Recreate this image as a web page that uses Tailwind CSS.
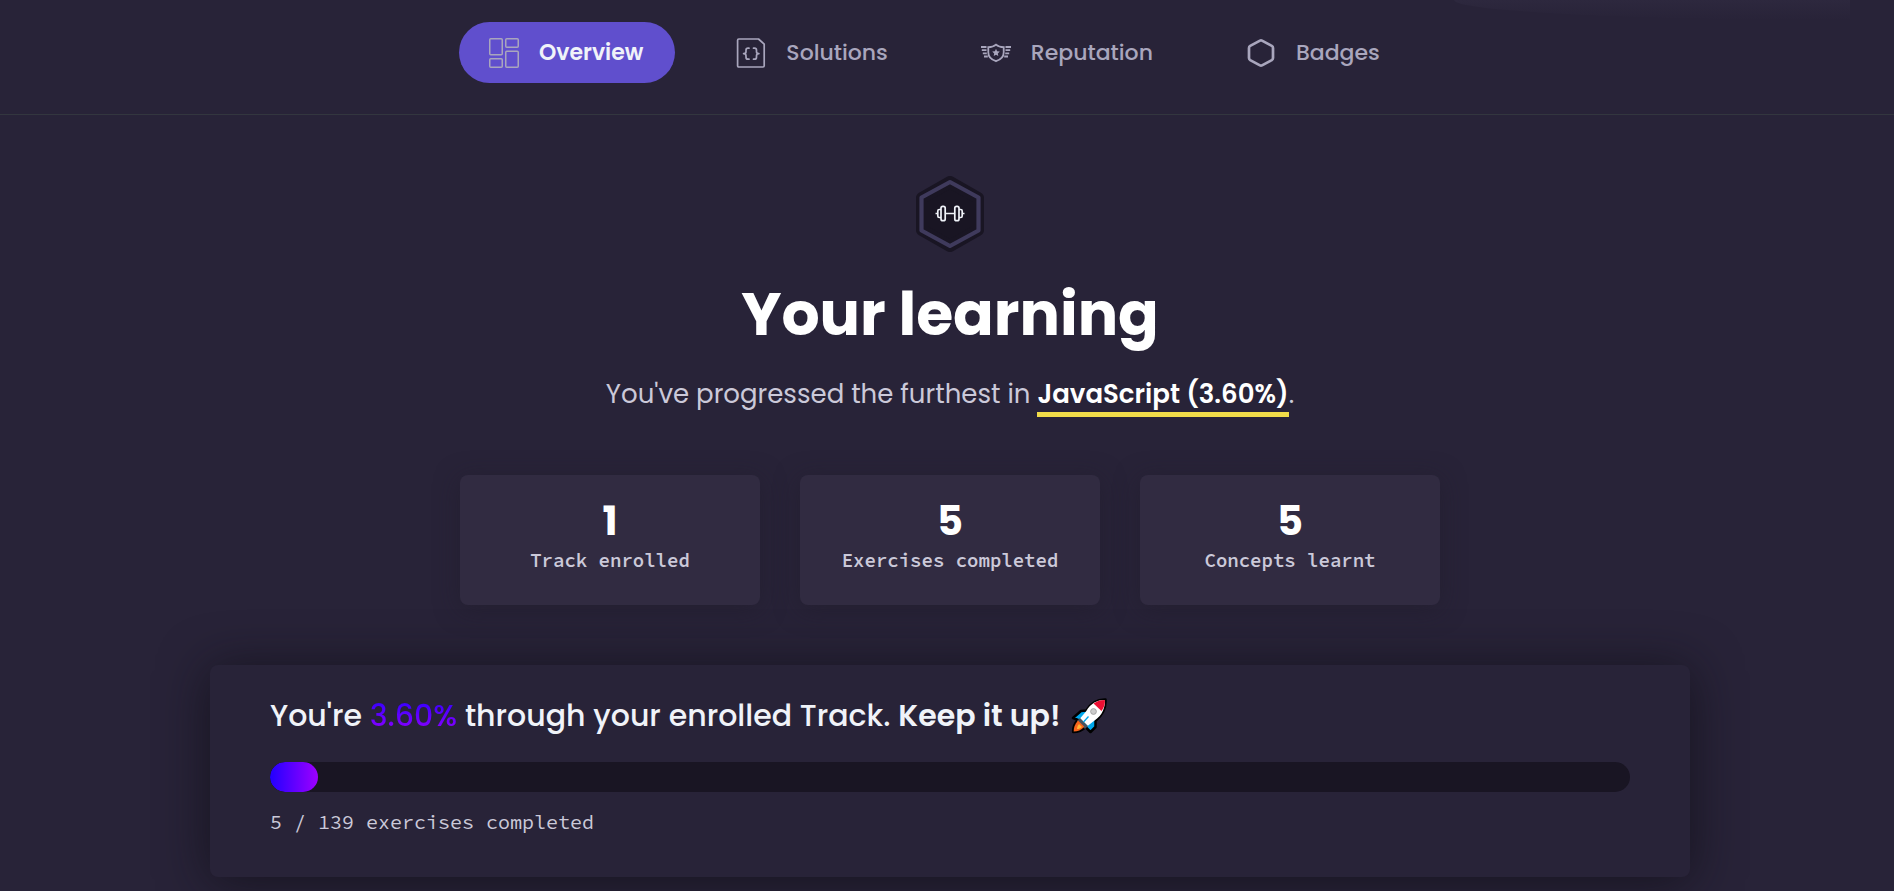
<!DOCTYPE html>
<html lang="en">
<head>
<meta charset="utf-8">
<meta name="viewport" content="width=device-width, initial-scale=1">
<title>Your learning</title>
<script src="https://cdn.jsdelivr.net/npm/@tailwindcss/browser@4"></script>
</head>
<body class="min-h-screen overflow-x-hidden bg-[#282338] font-['Poppins','Inter',sans-serif] text-[#f0f3f9]">
<header class="relative border-b border-[#33363f] pl-[6px]">
  <div class="pointer-events-none absolute top-0 right-[44px] h-[20px] w-[396px] rounded-bl-[100%] bg-linear-to-b from-[#2d283e] to-[#282338]"></div>
  <nav class="relative mx-auto flex max-w-[982px] gap-[31px] pt-[22px] pb-[31px] text-[22px] leading-[33px] font-medium text-[#a9a6bd]" aria-label="Dashboard">
    <a href="#" aria-current="page" class="flex items-center gap-5 rounded-full bg-[#604fcd] py-[14px] pr-8 pl-[30px] font-semibold text-[#f0f3f9]">
      <svg class="size-[30px]" viewBox="0 0 30 30" fill="none" stroke="#a9a6bd" stroke-width="1.5" aria-hidden="true"><rect x=".75" y=".75" width="12.5" height="16" rx="1"/><rect x="16.75" y=".75" width="12.5" height="8.5" rx="1"/><rect x=".75" y="20.75" width="12.5" height="8.5" rx="1"/><rect x="16.75" y="13.25" width="12.5" height="16" rx="1"/></svg>
      Overview
    </a>
    <a href="#" class="flex items-center gap-5 py-[14px] pr-8 pl-[30px]">
      <svg class="size-[30px]" viewBox="0 0 30 30" fill="none" stroke="currentColor" stroke-width="1.7" stroke-linecap="round" stroke-linejoin="round" aria-hidden="true"><path d="M2.8 1h19.7l5.7 5.2v21.6q0 1.2-1.2 1.2H2.8q-1.2 0-1.2-1.2V2.2Q1.600 1 2.800 1z"/><path d="M13 10.200h-1q-2 0-2 2v1.500q0 1.800-2.400 2 2.400.2 2.400 2v1.500q0 2 2 2h1M17.500 10.200h1q2 0 2 2v1.500q0 1.800 2.400 2-2.400.2-2.400 2v1.500q0 2-2 2h-1"/></svg>
      Solutions
    </a>
    <a href="#" class="flex items-center gap-5 py-[14px] pr-8 pl-[30px]">
      <svg class="size-[30px]" viewBox="0 0 30 30" fill="none" stroke="currentColor" stroke-width="1.8" aria-hidden="true"><path d="M15 6.600c2 1.800 4.500 2.600 7.700 2.600v5.300c0 4.600-3 7.200-7.700 8.700-4.700-1.500-7.700-4.100-7.700-8.700V9.200c3.200 0 5.700-.8 7.700-2.600z"/><path d="M0 9h5.500M.8 12.200h4.700M1.800 15.400h4M3 18.500h3.800M30 9h-5.500M29.200 12.200h-4.700M28.200 15.400h-4M27 18.500h-3.800"/><path d="M15 10.800l1.100 2.500 2.700.3-2 1.800.5 2.700-2.300-1.400-2.300 1.400.5-2.700-2-1.800 2.700-.3z" fill="currentColor" stroke="none"/></svg>
      Reputation
    </a>
    <a href="#" class="flex items-center gap-5 py-[14px] pr-8 pl-[30px]">
      <svg class="size-[30px]" viewBox="0 0 30 30" fill="none" stroke="currentColor" stroke-width="2.700" stroke-linejoin="round" aria-hidden="true"><path d="M14 2.600q1-.5 2 0l9.800 5.300q1.200.7 1.200 2v10.200q0 1.300-1.200 2L16 27.400q-1 .5-2 0l-9.800-5.300q-1.200-.7-1.200-2V9.900q0-1.300 1.200-2z"/></svg>
      Badges
    </a>
  </nav>
</header>
<main class="flex flex-col items-center pt-[61px] pb-[14px] pl-[6px]">
  <svg class="h-[76px] w-[68px]" viewBox="0 0 68 76" fill="none" aria-hidden="true"><path d="M34 6L62 22V54L34 70L6 54V22z" fill="#191523" stroke="#191523" stroke-width="12" stroke-linejoin="round"/><path d="M34 6L62.500 21.500V54.500L34 70L5.500 54.500V21.500z" stroke="#3f3a5c" stroke-width="4.200" stroke-linejoin="round"/><g stroke="#f0f3f9" stroke-width="1.700"><path d="M29.500 37.500h9M19.500 37.500h2M46.500 37.500h2"/><rect x="25" y="30.300" width="4.200" height="14.400" rx="1.800"/><rect x="38.800" y="30.300" width="4.200" height="14.400" rx="1.800"/><path d="M25 33.500h-1.700q-1.500 0-1.500 1.500v5q0 1.500 1.500 1.500H25M43 33.500h1.700q1.500 0 1.500 1.500v5q0 1.500-1.500 1.500H43"/></g></svg>
  <h1 class="mt-[25px] text-[60px] leading-[74px] font-bold text-white">Your learning</h1>
  <p class="mt-[22px] text-[26px] leading-[42px] text-[#cbc9d9]">You've progressed the furthest in <a href="#" class="inline-block border-b-[5px] border-[#f1dc49] leading-[36px] font-semibold text-white">JavaScript (3.60%)</a>.</p>
  <ul class="mt-[58px] grid w-full max-w-[980px] grid-cols-3 gap-10 text-center">
    <li class="rounded-lg bg-[#312b41] px-5 pt-[22px] pb-[30px] shadow-[0_4px_24px_#1f1b2a80]"><strong class="block text-[40px] leading-[48px] font-bold text-white">1</strong><span class="mt-px block font-['Source_Code_Pro','Liberation_Mono',monospace] text-[19px] leading-[29px] font-semibold text-[#cbc9d9]">Track enrolled</span></li>
    <li class="rounded-lg bg-[#312b41] px-5 pt-[22px] pb-[30px] shadow-[0_4px_24px_#1f1b2a80]"><strong class="block text-[40px] leading-[48px] font-bold text-white">5</strong><span class="mt-px block font-['Source_Code_Pro','Liberation_Mono',monospace] text-[19px] leading-[29px] font-semibold text-[#cbc9d9]">Exercises completed</span></li>
    <li class="rounded-lg bg-[#312b41] px-5 pt-[22px] pb-[30px] shadow-[0_4px_24px_#1f1b2a80]"><strong class="block text-[40px] leading-[48px] font-bold text-white">5</strong><span class="mt-px block font-['Source_Code_Pro','Liberation_Mono',monospace] text-[19px] leading-[29px] font-semibold text-[#cbc9d9]">Concepts learnt</span></li>
  </ul>
  <section class="mt-[60px] w-full max-w-[1480px] rounded-lg bg-[#282338] px-[60px] pt-[27px] pb-[39px] shadow-[0_4px_50px_#0f0d14b0]">
    <h2 class="flex items-center gap-[10px] text-[30px] leading-[48px] font-medium"><span>You're <span class="bg-linear-to-b/srgb from-[#2200ff] to-[#9e00ff] bg-clip-text text-transparent">3.60%</span> through your enrolled Track. <strong class="font-semibold">Keep it up!</strong></span>
      <svg class="size-9" viewBox="0 0 36 36" role="img" aria-label="Rocket"><path d="M34.500 1.500C27 1.300 20.500 4 15.500 12.500L10 13 2 20l5 2c-4 4-5 7.500-4.800 12C7 34 11 32.500 14.500 29l5 5 5-5v-6C32 17 35 9 34.500 1.500z" fill="#00a8ec" stroke="#000" stroke-width="2.500" stroke-linejoin="round"/><path d="M34 2c-8 0-14 3-19 11.500L9 20.500l7.500 7.500 7-5.500C32 17 34 9 34 2z" fill="#fff"/><path d="M34 2c-4.500 0-8 1-11.500 3.500l8 7.500C33 10 34 6 34 2z" fill="#ed1033"/><path d="M9 20l8 8-3 3-8-8z" fill="#46545e"/><path d="M7 22.500C3.500 26.500 2.700 30 2.700 33.500c4 0 7.300-1.300 10.600-4.700z" fill="#f7631b"/><path d="M8 26l3 3c-1.500 1.500-3 2-5 2 .2-2 .7-3.500 2-5z" fill="#ffb636"/><circle cx="22.500" cy="13.500" r="2.900" fill="#ccc" stroke="#999" stroke-width=".8"/><path d="M17.500 18.500L12.500 24" stroke="#00a8ec" stroke-width="1.300"/></svg>
    </h2>
    <div class="mt-[22px] h-[30px] overflow-hidden rounded-full bg-[#191523]" role="progressbar" aria-label="Exercises completed" aria-valuemin="0" aria-valuemax="139" aria-valuenow="5"><div class="h-full rounded-full bg-linear-to-r/srgb from-[#2200ff] to-[#9e00ff]" style="width:3.55%"></div></div>
    <p class="mt-[14px] font-['Source_Code_Pro','Liberation_Mono',monospace] text-[20px] leading-[32px] text-[#cbc9d9]">5 / 139 exercises completed</p>
  </section>
</main>
</body>
</html>
